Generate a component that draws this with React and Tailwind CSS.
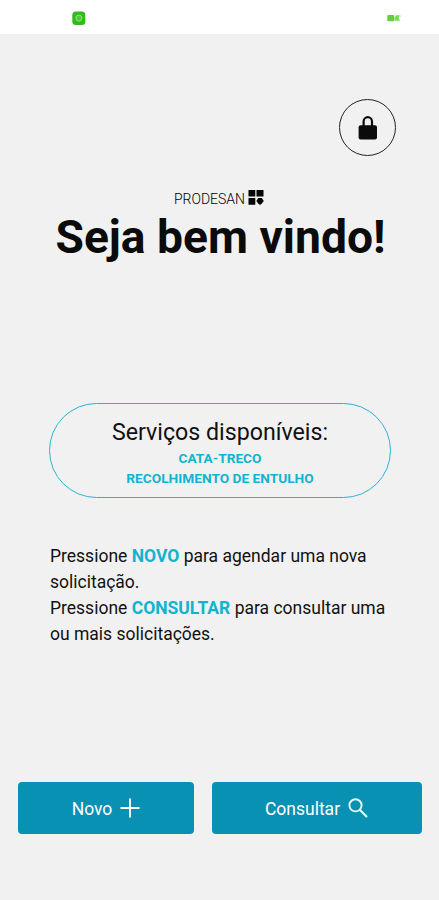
function StatusBar() {
  return (
    <div className="h-[34px] bg-white flex items-start justify-between pt-[11px] pl-[72px] pr-[37px]">
      <svg width="14" height="15" viewBox="0 0 14 15">
        <rect x="0.3" y="0.5" width="13" height="13.5" rx="3.5" fill="#35b91f" />
        <circle cx="6.9" cy="7.1" r="3.1" fill="#5fd04b" stroke="#8cdf7d" strokeWidth="1" />
        <path d="M5.4 6.2h3M5.4 8.2h3" stroke="#3fb52c" strokeWidth="0.8" />
      </svg>
      <svg className="mt-[3px]" width="15" height="8" viewBox="0 0 15 8">
        <rect x="0.3" y="1" width="7" height="6.3" rx="1" fill="#63cf3c" />
        <path d="M7.3 4.5L9 1.2h3.8l-1.2 3 1.6 2.6H8z" fill="#7bd958" />
        <path d="M12.5 1.2l1.7 0.5-1 1.6z" fill="#b9ecab" />
      </svg>
    </div>
  );
}

function LockIcon() {
  return (
    <svg width="20" height="24" viewBox="0 0 20 24">
      <path d="M5.6 10V5.4a4.2 4.2 0 0 1 8.4 0V10" fill="none" stroke="#0b0b0b" strokeWidth="2.2" />
      <rect x="0.6" y="9.3" width="18.4" height="14.2" rx="2" fill="#0b0b0b" />
    </svg>
  );
}

function LogoIcon() {
  return (
    <svg width="16" height="15" viewBox="0 0 16 15">
      <path d="M0.5 0h6.8v6.6H0.5zM8.5 0h7v6.6h-7zM0.5 8h6.8v6.8H0.5z" fill="#050505" />
      <path d="M10.2 8h3.6l2 3-2 2.4L12 15l-1.8-1.6-1.8-2.4z" fill="#050505" />
    </svg>
  );
}

function PlusIcon() {
  return (
    <svg width="20" height="20" viewBox="0 0 20 20">
      <path d="M10 0.5v19M0.5 10h19" stroke="#fff" strokeWidth="1.9" />
    </svg>
  );
}

function SearchIcon() {
  return (
    <svg width="20" height="20" viewBox="0 0 20 20" fill="none" stroke="#e6f6fb">
      <circle cx="7.5" cy="7.3" r="6.1" strokeWidth="1.9" />
      <path d="M12 12l7 7" strokeWidth="2.1" />
    </svg>
  );
}

export default function App() {
  return (
    <div className="w-[439px] h-[900px] bg-[#f1f1f1] font-['Roboto',sans-serif] text-[#111] flex flex-col overflow-hidden">
      <StatusBar />

      <div className="flex justify-end pt-[65px] pr-[43px]">
        <button className="size-[57px] rounded-full border border-[#222] flex items-center justify-center">
          <LockIcon />
        </button>
      </div>

      <header className="flex flex-col items-center mt-[31px]">
        <div className="flex items-center gap-[3px] h-[20px] pr-[1px]">
          <span className="text-[14px] leading-[20px] font-light text-black pt-[4px]">PRODESAN</span>
          <LogoIcon />
        </div>
        <h1 className="pl-[2px] text-[46.2px] leading-[60px] font-bold text-[#0b0b0b] whitespace-nowrap">Seja bem vindo!</h1>
      </header>

      <section className="mt-[136px] mx-[49px] h-[95px] w-[342px] rounded-full border border-[#28b5cf] flex flex-col items-center pt-[12px]">
        <h2 className="text-[23.2px] leading-[32px] whitespace-nowrap">Serviços disponíveis:</h2>
        <p className="text-[13.7px] leading-[20px] font-bold text-[#12b3d0]">CATA-TRECO</p>
        <p className="text-[13.7px] leading-[20px] font-bold text-[#12b3d0] whitespace-nowrap">RECOLHIMENTO DE ENTULHO</p>
      </section>

      <div className="mt-[45px] ml-[50px] text-[17.5px] leading-[26px] whitespace-nowrap">
        <p>
          Pressione <b className="text-[#12b3d0]">NOVO</b> para agendar uma nova
          <br />
          solicitação.
        </p>
        <p>
          Pressione <b className="text-[#12b3d0]">CONSULTAR</b> para consultar uma
          <br />
          ou mais solicitações.
        </p>
      </div>

      <div className="flex gap-[18px] mt-[135px] ml-[18px]">
        <button className="w-[176px] h-[52px] rounded-[4px] bg-[#0891b2] text-white text-[17.5px] flex items-center justify-center gap-[8px]">
          <span className="pt-[2px]">Novo</span>
          <PlusIcon />
        </button>
        <button className="w-[210px] h-[52px] rounded-[4px] bg-[#0891b2] text-white text-[17.5px] flex items-center justify-center gap-[8px] pr-[1px]">
          <span className="pt-[2px]">Consultar</span>
          <SearchIcon />
        </button>
      </div>
    </div>
  );
}
